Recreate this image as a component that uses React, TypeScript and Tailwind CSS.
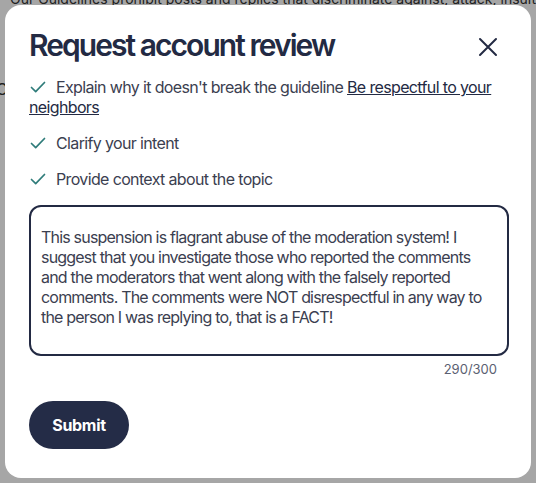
import React from 'react';

const checks = [
  {
    text: "Explain why it doesn't break the guideline ",
    link: 'Be respectful to your neighbors',
  },
  { text: 'Clarify your intent' },
  { text: 'Provide context about the topic' },
];

const reviewLines = [
  'This suspension is flagrant abuse of the moderation system! I',
  'suggest that you investigate those who reported the comments',
  'and the moderators that went along with the falsely reported',
  'comments. The comments were NOT disrespectful in any way to',
  'the person I was replying to, that is a FACT!',
];

const CheckIcon = () => (
  <svg width="16" height="16" viewBox="0 0 16 16" fill="none" className="inline-block align-[-2px] mr-[10px] ml-[1px]">
    <path d="M1.5 8.5l4.2 4.2L14.5 3.5" stroke="#2f7c7a" strokeWidth="1.7" strokeLinecap="round" strokeLinejoin="round" />
  </svg>
);

const CloseIcon = () => (
  <svg width="20" height="20" viewBox="0 0 20 20" fill="none">
    <path d="M2 2l16 16M18 2L2 18" stroke="#232a43" strokeWidth="2" strokeLinecap="round" />
  </svg>
);

export default function App() {
  return (
    <div
      className="relative w-[536px] h-[483px] overflow-hidden bg-white"
      style={{ fontFamily: 'Inter, "Noto Sans", sans-serif' }}
    >
      {/* page behind the dialog */}
      <div className="px-[10px] -mt-[13px] text-[14px] leading-[24px] text-[#333]">
        <p className="whitespace-nowrap">Our Guidelines prohibit posts and replies that discriminate against, attack, insult,</p>
        <p className="mt-[66px] -ml-[14px] text-[16px]">C</p>
      </div>

      <div className="absolute inset-0 bg-black/35" />

      <div className="absolute left-[5px] top-[5px] w-[526px] h-[473px] rounded-[16px] bg-white px-6 pt-[22px] tracking-[-0.04em]">
        <div className="flex items-start justify-between">
          <h2 className="text-[30px] leading-[36px] font-semibold tracking-[-0.065em] text-[#232a43]">
            Request account review
          </h2>
          <button className="mt-[10px] mr-[9px]">
            <CloseIcon />
          </button>
        </div>

        <ul className="mt-[14px] flex flex-col gap-4 pr-[10px]">
          {checks.map((c) => (
            <li key={c.text} className="text-[16px] leading-5 text-[#3b4050]">
              <CheckIcon />
              {c.text}
              {c.link && <a className="underline text-[#232a43]">{c.link}</a>}
            </li>
          ))}
        </ul>

        <div className="mt-4 w-[480px] h-[151px] rounded-[12px] border-2 border-[#232a43] pl-[10px] pt-[20px] text-[16px] leading-5 tracking-[-0.05em] text-[#3b4050]">
          {reviewLines.map((l) => (
            <div key={l} className="whitespace-nowrap">{l}</div>
          ))}
        </div>
        <div className="w-[468px] mt-[5px] text-right text-[13px] leading-4 tracking-normal text-[#5b6072]">290/300</div>

        <button className="mt-[24px] h-12 w-[100px] rounded-full bg-[#242c47] text-white text-[16px] font-bold tracking-[-0.02em]">
          Submit
        </button>
      </div>
    </div>
  );
}
